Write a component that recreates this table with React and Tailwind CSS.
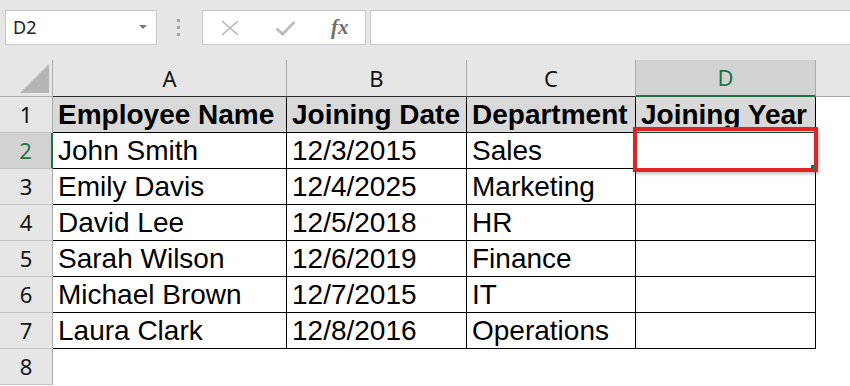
import React from "react";

const rows = [
  ["Employee Name", "Joining Date", "Department", "Joining Year"],
  ["John Smith", "12/3/2015", "Sales", ""],
  ["Emily Davis", "12/4/2025", "Marketing", ""],
  ["David Lee", "12/5/2018", "HR", ""],
  ["Sarah Wilson", "12/6/2019", "Finance", ""],
  ["Michael Brown", "12/7/2015", "IT", ""],
  ["Laura Clark", "12/8/2016", "Operations", ""],
];

const hdrFont = { fontFamily: '"Noto Sans", "Open Sans", sans-serif' };
const cellFont = { fontFamily: '"Liberation Sans", Arial, sans-serif' };

export default function App() {
  return (
    <div className="relative w-[850px] h-[386px] overflow-hidden bg-white">
      {/* Formula bar */}
      <div className="flex items-start h-[60px] bg-[#e6e6e6] pt-[10px] pl-[5px]">
        <div
          className="w-[152px] h-[35px] bg-white border border-[#c6c6c6] flex items-center justify-between pl-[7px] pr-[9px] text-[18px] text-[#222]"
          style={hdrFont}
        >
          <span>D2</span>
          <svg width="8" height="5" viewBox="0 0 8 5">
            <path d="M0 0 L8 0 L4 4 Z" fill="#7a7a7a" />
          </svg>
        </div>
        <div className="ml-[20px] mt-[9px] flex flex-col gap-[4px]">
          <div className="w-[3px] h-[3px] bg-[#a6a6a6]" />
          <div className="w-[3px] h-[3px] bg-[#a6a6a6]" />
          <div className="w-[3px] h-[3px] bg-[#a6a6a6]" />
        </div>
        <div className="ml-[22px] w-[164px] h-[35px] bg-white border border-[#c6c6c6] flex items-center pl-[18px]">
          <svg width="18" height="16" viewBox="0 0 18 16">
            <path d="M1 1 L17 15 M17 1 L1 15" stroke="#b5b5b5" strokeWidth="1.6" fill="none" />
          </svg>
          <svg className="ml-[36px]" width="21" height="16" viewBox="0 0 21 16">
            <path d="M1.5 8.5 L7.5 14 L19.5 2" stroke="#bdbdbd" strokeWidth="3" fill="none" />
          </svg>
          <span
            className="ml-[35px] italic font-bold text-[21px] text-[#6e6e6e] leading-none"
            style={{ fontFamily: '"Liberation Serif", "Times New Roman", serif' }}
          >
            fx
          </span>
        </div>
        <div className="ml-[4px] flex-1 h-[35px] bg-white border border-[#c6c6c6] border-r-0" />
      </div>

      {/* Sheet */}
      <div className="grid grid-cols-[53px_234px_180px_169px_180px_1fr] grid-rows-[37px_repeat(8,36px)_1fr]">
        {/* Column header row */}
        <div className="bg-[#e6e6e6] border-r border-b border-[#ababab] relative">
          <svg className="absolute left-[20px] top-[4px]" width="30" height="30" viewBox="0 0 30 30">
            <path d="M29 0 L29 29 L0 29 Z" fill="#b4b4b4" />
          </svg>
        </div>
        {["A", "B", "C"].map((c) => (
          <div
            key={c}
            className="bg-[#e6e6e6] border-r border-r-[#ababab] border-b border-b-[#2a2a2a] flex items-center justify-center text-[22px] text-[#111]"
            style={hdrFont}
          >
            {c}
          </div>
        ))}
        <div
          className="bg-[#d2d2d2] border-r border-r-[#ababab] border-b-2 border-b-[#217346] flex items-center justify-center text-[22px] text-[#217346]"
          style={hdrFont}
        >
          D
        </div>
        <div className="bg-[#e6e6e6] border-b border-[#ababab]" />

        {/* Data rows */}
        {rows.map((r, i) => {
          const sel = i === 1;
          const bold = i === 0;
          return (
            <React.Fragment key={i}>
              <div
                className={
                  sel
                    ? "bg-[#d2d2d2] border-r-2 border-r-[#217346] border-b border-b-[#c4c4c4] flex items-center justify-center text-[22px] text-[#217346]"
                    : "bg-[#e6e6e6] border-r border-r-[#ababab] border-b border-b-[#c4c4c4] flex items-center justify-center text-[22px] text-[#111]"
                }
                style={hdrFont}
              >
                {i + 1}
              </div>
              {r.map((v, j) => (
                <div
                  key={j}
                  className={
                    (bold ? "bg-[#d9d9d9] font-bold " : "bg-white ") +
                    "border-r border-b border-black pl-[5px] text-[28px] leading-[35px] text-black whitespace-nowrap overflow-hidden"
                  }
                  style={cellFont}
                >
                  {v}
                </div>
              ))}
              <div className="bg-white" />
            </React.Fragment>
          );
        })}

        {/* Row 8 */}
        <div
          className="bg-[#e6e6e6] border-r border-r-[#ababab] border-b border-b-[#c4c4c4] flex items-center justify-center text-[22px] text-[#111]"
          style={hdrFont}
        >
          8
        </div>
        <div className="col-span-5 bg-white" />
        <div className="bg-[#e6e6e6] border-r border-[#ababab]" />
        <div className="col-span-5 bg-white" />
      </div>

      {/* Selection annotation */}
      <div className="absolute left-[633px] top-[127px] w-[185px] h-[45px] border-[4px] border-[#e02424] shadow-[1px_2px_3px_rgba(0,0,0,0.25)]">
        <div className="absolute left-[0px] top-[1px] right-[0px] h-[1px] bg-[#217346] opacity-70" />
        <div className="absolute right-[-1px] bottom-[-1px] w-[4px] h-[4px] bg-[#217346]" />
      </div>
    </div>
  );
}
